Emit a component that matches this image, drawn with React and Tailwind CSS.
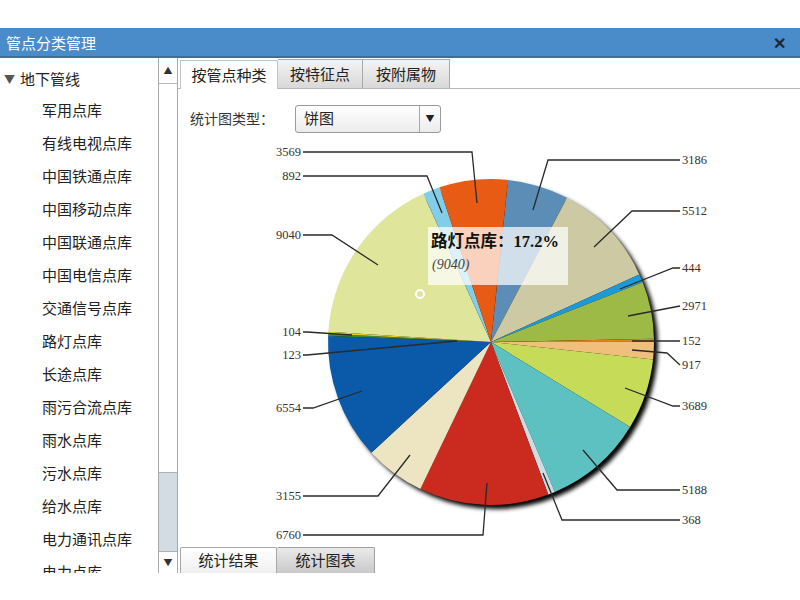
const items = [
  '军用点库',
  '有线电视点库',
  '中国铁通点库',
  '中国移动点库',
  '中国联通点库',
  '中国电信点库',
  '交通信号点库',
  '路灯点库',
  '长途点库',
  '雨污合流点库',
  '雨水点库',
  '污水点库',
  '给水点库',
  '电力通讯点库',
  '电力点库',
];

const slices = [
  { v: 3186, c: '#5b8db6' },
  { v: 5512, c: '#cdc9a2' },
  { v: 444, c: '#1c9ad8' },
  { v: 2971, c: '#9dba46' },
  { v: 152, c: '#e3871c' },
  { v: 917, c: '#f0bf7c' },
  { v: 3689, c: '#c6db58' },
  { v: 5188, c: '#5ec1c1' },
  { v: 368, c: '#c9dde2' },
  { v: 6760, c: '#cb2a1f' },
  { v: 3155, c: '#ede5c2' },
  { v: 6554, c: '#0b5aa9' },
  { v: 123, c: '#3a8d2e' },
  { v: 104, c: '#e2d21a' },
  { v: 9040, c: '#dfe69c' },
  { v: 892, c: '#82cde8' },
  { v: 3569, c: '#e85b14' },
];

// label, leader points (slice -> label), text side
const leaders = [
  ['3186', [[533, 212], [548, 162], [680, 162]], 'start'],
  ['5512', [[594, 249], [632, 213], [680, 213]], 'start'],
  ['444', [[620, 291], [673, 270], [680, 270]], 'start'],
  ['2971', [[628, 318], [680, 308]], 'start'],
  ['152', [[632, 343], [680, 343]], 'start'],
  ['917', [[632, 352], [667, 355], [680, 367]], 'start'],
  ['3689', [[625, 390], [673, 408], [680, 408]], 'start'],
  ['5188', [[583, 452], [617, 492], [680, 492]], 'start'],
  ['368', [[543, 475], [562, 522], [680, 522]], 'start'],
  ['6760', [[487, 485], [483, 537], [303, 537]], 'end'],
  ['3155', [[410, 457], [378, 498], [303, 498]], 'end'],
  ['6554', [[362, 393], [313, 410], [303, 410]], 'end'],
  ['123', [[457, 343], [307, 357], [303, 357]], 'end'],
  ['104', [[352, 337], [307, 334], [303, 334]], 'end'],
  ['9040', [[378, 267], [332, 237], [303, 237]], 'end'],
  ['892', [[442, 215], [427, 178], [303, 178]], 'end'],
  ['3569', [[477, 205], [472, 154], [303, 154]], 'end'],
];

function PieChart() {
  const cx = 491;
  const cy = 344;
  const r = 163;
  const total = slices.reduce((s, x) => s + x.v, 0);
  let a = 6;
  const pt = (deg) => {
    const t = (deg * Math.PI) / 180;
    return [cx + r * Math.sin(t), cy - r * Math.cos(t)];
  };
  const paths = slices.map((s) => {
    const start = a;
    const sweep = (s.v / total) * 360;
    a += sweep;
    const [x1, y1] = pt(start);
    const [x2, y2] = pt(start + sweep);
    const large = sweep > 180 ? 1 : 0;
    return (
      <path
        key={s.v}
        d={`M${cx} ${cy} L${x1} ${y1} A${r} ${r} 0 ${large} 1 ${x2} ${y2} Z`}
        fill={s.c}
      />
    );
  });

  return (
    <svg width="622" height="409" viewBox="178 138 622 409" className="block">
      <defs>
        <filter id="sh" x="-10%" y="-10%" width="120%" height="120%">
          <feGaussianBlur stdDeviation="2" />
        </filter>
      </defs>
      <circle cx={cx + 4} cy={cy + 4} r={r} fill="#000" filter="url(#sh)" />
      {paths}
      {leaders.map(([label, pts, anchor]) => {
        const last = pts[pts.length - 1];
        return (
          <g key={label}>
            <polyline
              points={pts.map((p) => p.join(',')).join(' ')}
              fill="none"
              stroke="#2a2a2a"
              strokeWidth="1.3"
            />
            <text
              x={anchor === 'start' ? last[0] + 2 : last[0] - 2}
              y={last[1] + 4}
              textAnchor={anchor}
              fontSize="12.5"
              fill="#333"
              style={{ fontFamily: '"Liberation Serif", serif' }}
            >
              {label}
            </text>
          </g>
        );
      })}
      <circle cx="420" cy="296" r="4" fill="none" stroke="#fff" strokeWidth="2" />
      <rect x="428" y="229" width="140" height="58" fill="#fff" fillOpacity="0.72" />
      <text
        x="431"
        y="249"
        fontSize="16.5"
        fontWeight="700"
        fill="#111"
        style={{ fontFamily: '"Liberation Serif", "Noto Sans CJK SC", serif' }}
      >
        路灯点库：17.2%
      </text>
      <text
        x="432"
        y="271"
        fontSize="14"
        fontStyle="italic"
        fill="#444"
        style={{ fontFamily: '"Liberation Serif", serif' }}
      >
        (9040)
      </text>
    </svg>
  );
}

export default function App() {
  return (
    <div
      className="w-[800px] h-[600px] bg-white pt-[28px] overflow-hidden"
      style={{ fontFamily: '"Noto Sans CJK SC", "Liberation Sans", sans-serif' }}
    >
      <div className="h-[545px] flex flex-col overflow-hidden">
        <div className="h-[30px] shrink-0 bg-[#4a8bca] border-b-2 border-[#3a6f9e] flex items-center justify-between px-[6px]">
          <span className="text-white text-[15px] leading-none">管点分类管理</span>
          <span className="text-[#1a2a3a] text-[16px] font-bold leading-none mr-[8px]">✕</span>
        </div>
        <div className="flex-1 flex min-h-0">
          <div className="w-[158px] shrink-0 overflow-hidden text-[15px] text-[#222]">
            <div className="h-[36px] flex items-center pl-[4px] pt-[6px]">
              <span className="text-[11px] text-[#555] mr-[5px]">▼</span>
              <span>地下管线</span>
            </div>
            {items.map((t) => (
              <div key={t} className="h-[33px] flex items-center pl-[42px]">
                {t}
              </div>
            ))}
          </div>
          <div className="w-[20px] shrink-0 border-x border-[#a8a8a8] flex flex-col bg-white">
            <div className="h-[26px] border-b border-[#b8b8b8] flex items-center justify-center text-[9px] text-[#333]">
              ▲
            </div>
            <div className="flex-1" />
            <div className="h-[80px] bg-[#d3dbe3] border-y border-[#a9b3bd]" />
            <div className="h-[21px] flex items-center justify-center text-[9px] text-[#333]">▼</div>
          </div>
          <div className="flex-1 flex flex-col min-w-0">
            <div className="h-[31px] shrink-0 flex items-end border-b border-[#b9b9b9] pl-[2px] text-[15px] text-[#222]">
              <div className="w-[98px] h-[29px] flex items-center justify-center bg-white border-t border-x border-[#c4c4c4] -mb-px">
                按管点种类
              </div>
              <div className="w-[85px] h-[29px] flex items-center justify-center bg-gradient-to-b from-[#f4f4f4] to-[#d8d8d8] border-t border-r border-[#a8a8a8]">
                按特征点
              </div>
              <div className="w-[87px] h-[29px] flex items-center justify-center bg-gradient-to-b from-[#f4f4f4] to-[#d8d8d8] border-t border-r border-[#a8a8a8]">
                按附属物
              </div>
            </div>
            <div className="h-[47px] shrink-0 flex items-center pl-[12px] pt-[12px]">
              <span className="text-[14px] text-[#333] w-[105px]">统计图类型：</span>
              <div className="w-[146px] h-[28px] flex border border-[#9a9a9a] rounded-[3px] bg-gradient-to-b from-white to-[#ececec]">
                <div className="flex-1 flex items-center pl-[8px] text-[15px] text-[#222]">饼图</div>
                <div className="w-[21px] border-l border-[#a8a8a8] flex items-center justify-center text-[9px] text-[#222]">
                  ▼
                </div>
              </div>
            </div>
            <div className="flex-1 min-h-0 overflow-hidden">
              <PieChart />
            </div>
            <div className="h-[26px] shrink-0 flex items-stretch pl-[2px] text-[15px] text-[#222] -mt-[1px]">
              <div className="w-[97px] flex items-center justify-center bg-gradient-to-b from-white to-[#f0f0f0] border border-[#a8a8a8] border-b-0 rounded-t-[2px]">
                统计结果
              </div>
              <div className="w-[98px] flex items-center justify-center bg-gradient-to-b from-[#eaeaea] to-[#c9c9c9] border-t border-r border-[#a0a0a0] rounded-t-[2px]">
                统计图表
              </div>
            </div>
          </div>
        </div>
      </div>
    </div>
  );
}
